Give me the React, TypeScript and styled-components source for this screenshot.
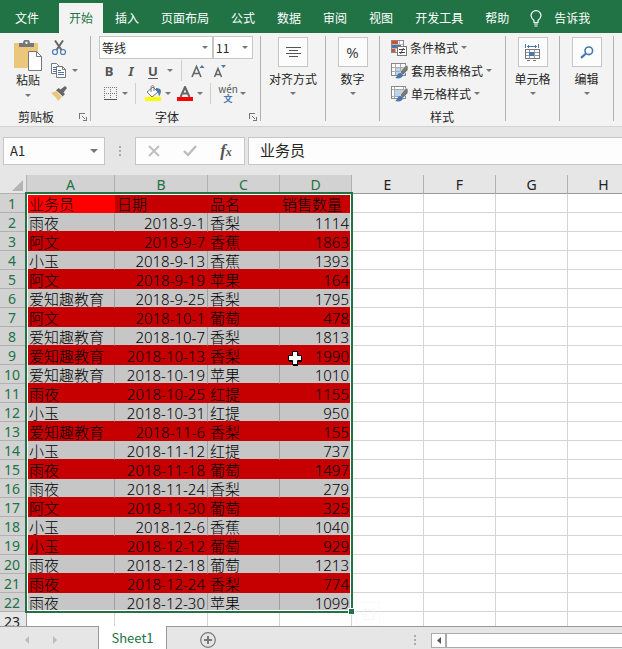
import React from "react";
import styled, { createGlobalStyle, css } from "styled-components";

const GREEN = "#217346";
const FONT = '"Noto Sans CJK SC", "Noto Sans", sans-serif';

const GlobalStyle = createGlobalStyle`
  *, *::before, *::after { box-sizing: border-box; }
  body { margin: 0; background: #e6e6e6; }
  button, input, select {
    font: inherit;
    color: inherit;
    border: 0;
    padding: 0;
    margin: 0;
    background: none;
    border-radius: 0;
  }
  svg { display: block; flex: none; }
`;

const Workbook = styled.div`
  display: flex;
  flex-direction: column;
  height: 100vh;
  overflow: hidden;
  background: #e6e6e6;
  color: #262626;
  font-family: ${FONT};
  font-size: 12px;
  line-height: 16px;
`;

/* ---------- Tabs ---------- */

const TabStrip = styled.nav`
  display: flex;
  flex: none;
  height: 33px;
  padding-top: 3px;
  background: ${GREEN};
  color: #fff;
  white-space: nowrap;
`;

const RibbonTab = styled.button<{ $active?: boolean; $file?: boolean }>`
  flex: none;
  padding: 0 11px;
  ${(p) => p.$file && css`padding: 0 20px 0 15px;`}
  ${(p) => p.$active && css`
    margin-right: 1px;
    padding: 0 10px;
    background: #f3f3f3;
    color: ${GREEN};
  `}
`;

const TellMe = styled.button`
  display: flex;
  flex: none;
  align-items: center;
  gap: 12px;
  padding: 0 10px;
`;

/* ---------- Ribbon ---------- */

const Ribbon = styled.div`
  display: flex;
  flex: none;
  align-items: flex-start;
  padding-top: 3px;
  background: #f3f3f3;
  border-bottom: 1px solid #d2d2d2;
  white-space: nowrap;
`;

const Divider = styled.div`
  flex: none;
  width: 1px;
  height: 85px;
  background: #b1b1b1;
`;

const Group = styled.section<{ $width: number; $pad?: number }>`
  display: flex;
  flex: none;
  flex-direction: column;
  width: ${(p) => p.$width}px;
  height: 90px;
  padding-left: ${(p) => p.$pad ?? 0}px;
`;

const GroupFooter = styled.footer<{ $pad?: number }>`
  display: flex;
  align-items: center;
  justify-content: space-between;
  height: 17px;
  margin-top: 3px;
  padding: 0 3px 0 ${(p) => p.$pad ?? 0}px;
`;

const ToolRow = styled.div<{ $gap?: number }>`
  display: flex;
  align-items: center;
  height: 23px;
  gap: ${(p) => p.$gap ?? 2}px;
`;

const ClipboardBody = styled.div`
  display: flex;
  height: 69px;
  gap: 5px;
`;

const PasteButton = styled.button`
  display: flex;
  flex-direction: column;
  align-items: center;
  width: 32px;
  padding-top: 4px;
`;

const PasteLabel = styled.span`
  margin: 1px 0 6px;
`;

const IconButton = styled.button<{ $width?: number }>`
  display: flex;
  flex: none;
  align-items: center;
  justify-content: center;
  width: ${(p) => p.$width ?? 20}px;
  height: 22px;
`;

const Glyph = styled.span<{ $italic?: boolean; $underline?: boolean }>`
  color: #555;
  font-family: "Noto Sans", sans-serif;
  font-size: 13px;
  font-weight: 700;
  font-style: ${(p) => (p.$italic ? "italic" : "normal")};
  text-decoration: ${(p) => (p.$underline ? "underline" : "none")};
  text-underline-offset: 2px;
`;

const SmallDivider = styled.div`
  width: 1px;
  height: 21px;
  margin: 0 4px;
  background: #cfcfcf;
`;

const Combo = styled.label<{ $width: number }>`
  display: grid;
  align-items: center;
  width: ${(p) => p.$width}px;
  height: 23px;
  border: 1px solid #c6c6c6;
  background: #fff;
  & > * { grid-area: 1 / 1; }
  & > svg { justify-self: end; margin-right: 4px; pointer-events: none; }
`;

const ComboSelect = styled.select`
  appearance: none;
  width: 100%;
  height: 21px;
  padding-left: 2px;
`;

const BigButton = styled.button`
  display: flex;
  flex-direction: column;
  align-items: center;
  width: 100%;
  padding-top: 1px;
`;

const BigIcon = styled.span`
  display: flex;
  align-items: center;
  justify-content: center;
  width: 30px;
  height: 30px;
  margin-bottom: 4px;
  border: 1px solid #c6c6c6;
  background: #fcfcfc;
`;

const BigLabel = styled.span`
  margin-bottom: 5px;
`;

const Percent = styled.span`
  color: #444;
  font-family: "Noto Sans", sans-serif;
  font-size: 15px;
`;

const StyleButton = styled.button`
  display: flex;
  align-items: center;
  gap: 3px;
  height: 23px;
`;

const StyleFooter = styled(GroupFooter)`
  justify-content: center;
  padding: 0 12px 0 0;
`;

/* ---------- Formula bar ---------- */

const FormulaBar = styled.div`
  display: flex;
  flex: none;
  align-items: flex-start;
  height: 48px;
  padding: 10px 0 0 3px;
`;

const NameBox = styled.div`
  display: flex;
  align-items: center;
  width: 102px;
  height: 28px;
  border: 1px solid #c6c6c6;
  background: #fdfdfd;
`;

const NameInput = styled.input`
  flex: 1;
  min-width: 0;
  padding-left: 6px;
  outline: 0;
  font-size: 13px;
`;

const Grip = styled.span`
  display: flex;
  justify-content: center;
  width: 30px;
  padding-top: 9px;
`;

const FormulaTools = styled.div`
  display: flex;
  align-items: center;
  justify-content: space-around;
  width: 110px;
  height: 28px;
  margin-right: 3px;
  border: 1px solid #c6c6c6;
  background: #fdfdfd;
`;

const Fx = styled.span`
  color: #555;
  font-family: "Liberation Serif", serif;
  font-size: 17px;
  font-style: italic;
  font-weight: 700;
  & > small { font-size: 12px; }
`;

const FormulaInput = styled.input`
  flex: 1;
  min-width: 0;
  height: 28px;
  padding: 0 0 3px 11px;
  border: 1px solid #c6c6c6;
  border-right: 0;
  background: #fdfdfd;
  outline: 0;
  font-size: 15px;
`;

/* ---------- Grid ---------- */

const SheetArea = styled.main`
  position: relative;
  flex: 1;
  min-height: 0;
  overflow: hidden;
  background: #fff;
`;

const Sheet = styled.table`
  width: 675px;
  min-width: 100%;
  table-layout: fixed;
  border-collapse: separate;
  border-spacing: 0;
  color: #000;
  font-family: "Noto Sans", ${FONT};
  font-size: 15px;
  font-weight: 300;
  line-height: 16px;
`;

const Col = styled.col<{ $width: number }>`
  width: ${(p) => p.$width}px;
`;

const ColumnHead = styled.th<{ $selected?: boolean }>`
  height: 19px;
  padding: 2px 0 0;
  border-right: 1px solid #b1b1b1;
  border-bottom: 1px solid #999;
  background: ${(p) => (p.$selected ? "#d2d2d2" : "#e6e6e6")};
  color: ${(p) => (p.$selected ? GREEN : "#222")};
  font-size: 14px;
  font-weight: 400;
`;

const Corner = styled.td`
  padding: 0 3px 2px 0;
  border-right: 1px solid #b1b1b1;
  border-bottom: 1px solid #b1b1b1;
  background: #e6e6e6;
  vertical-align: bottom;
  & > svg { margin-left: auto; }
`;

const RowHead = styled.th<{ $selected?: boolean }>`
  height: 19px;
  padding: 2px 2px 0 0;
  border-right: 1px solid #999;
  border-bottom: 1px solid #b1b1b1;
  background: ${(p) => (p.$selected ? "#d2d2d2" : "#e6e6e6")};
  color: ${(p) => (p.$selected ? GREEN : "#222")};
  font-size: 14px;
  font-weight: 400;
`;

type Fill = "none" | "grey" | "red" | "active";
const fills: Record<Fill, [string, string, string]> = {
  none: ["#fff", "#d4d4d4", "#d4d4d4"],
  grey: ["#c6c6c6", "#a0a0a0", "#c60000"],
  red: ["#c60000", "#c60000", "#c60000"],
  active: ["#ff0000", "#ff0000", "#ff0000"],
};

const Cell = styled.td<{ $fill: Fill; $right?: boolean }>`
  height: 19px;
  padding: 2px 2px 0;
  border-right: 1px solid ${(p) => fills[p.$fill][1]};
  border-bottom: 1px solid ${(p) => fills[p.$fill][2]};
  background: ${(p) => fills[p.$fill][0]};
  text-align: ${(p) => (p.$right ? "right" : "left")};
  white-space: nowrap;
`;

const Selection = styled.div`
  position: absolute;
  top: 17px;
  left: 25px;
  width: 328px;
  height: 421px;
  border: 2px solid ${GREEN};
  box-shadow: inset 0 0 0 1px #fff;
  pointer-events: none;
  &::after {
    content: "";
    position: absolute;
    right: -4px;
    bottom: -4px;
    width: 7px;
    height: 7px;
    border: 1px solid #fff;
    background: ${GREEN};
  }
`;

const PlusCursor = styled.svg`
  position: absolute;
  top: 175px;
  left: 287px;
`;

const QuickAnalysis = styled.svg`
  position: absolute;
  top: 427px;
  left: 356px;
`;

/* ---------- Sheet tabs ---------- */

const SheetBar = styled.footer`
  display: flex;
  flex: none;
  height: 23px;
  border-top: 1px solid #999;
`;

const SheetNav = styled.div`
  display: flex;
  justify-content: space-between;
  width: 98px;
  padding: 2px 33px 0 17px;
`;

const SheetTab = styled.button`
  width: 69px;
  margin-top: -1px;
  border: solid #999;
  border-width: 0 1px;
  background: #fff;
  color: ${GREEN};
  font-size: 13px;
`;

const AddSheet = styled.button`
  display: flex;
  margin-left: 33px;
  padding-top: 5px;
`;

const BarGrip = styled.span`
  margin-left: auto;
  padding-top: 8px;
`;

const ScrollBar = styled.div`
  display: flex;
  width: 191px;
  height: 15px;
  margin: 6px 0 0 15px;
  border: 1px solid #ababab;
  border-right: 0;
  background: #fff;
`;

const ScrollLeft = styled.button`
  display: flex;
  align-items: center;
  justify-content: center;
  width: 15px;
  border-right: 2px solid #ababab;
`;

/* ---------- Icons ---------- */

const Caret = ({ size = 6, color = "#777" }: { size?: number; color?: string }) => (
  <svg width={size} height={Math.ceil(size / 2)} viewBox="0 0 6 3" preserveAspectRatio="none">
    <path d="M0 0h6L3 3z" fill={color} />
  </svg>
);

const Dots = () => (
  <svg width="2" height="11" viewBox="0 0 2 11" fill="#aaa" shapeRendering="crispEdges">
    <path d="M0 0h2v2H0zM0 4h2v2H0zM0 8h2v2H0z" />
  </svg>
);

const Bulb = () => (
  <svg width="12" height="17" viewBox="0 0 12 17" fill="none" stroke="#fff" strokeWidth="1.2">
    <path d="M4 12.5v-2C2 9 1 7.8 1 5.6a5 5 0 0 1 10 0C11 7.8 10 9 8 10.500v2zM4 14h4M4.500 16h3" />
  </svg>
);

const PasteIcon = () => (
  <svg width="28" height="31" viewBox="0 0 28 31">
    <path d="M0 3h24v25H0z" fill="#ebc77c" />
    <path d="M5 7V3h4a3.500 3.500 0 0 1 7 0h4v4z" fill="#777" />
    <circle cx="12.500" cy="2.800" r="1.200" fill="#f3f3f3" />
    <path d="M14.500 11.500h8l5 5v14h-13z" fill="#fff" stroke="#777" />
    <path d="M22.500 11.500v5h5" fill="none" stroke="#777" />
  </svg>
);

const ScissorsIcon = () => (
  <svg width="16" height="16" viewBox="0 0 16 16" fill="none">
    <path d="M4 0.500 L10.500 10M12 0.500 L5.500 10" stroke="#666" strokeWidth="2" />
    <circle cx="4" cy="12" r="2.500" stroke="#4677ae" strokeWidth="1.200" />
    <circle cx="12" cy="12" r="2.500" stroke="#4677ae" strokeWidth="1.200" />
  </svg>
);

const CopyIcon = () => (
  <svg width="16" height="15" viewBox="0 0 16 15" fill="#fff" stroke="#777">
    <path d="M.5.5h5l3 3v7h-8z" />
    <path d="M2 4.500h3M2 6.500h3M2 8.500h3" stroke="#4677ae" />
    <path d="M5.500 3.500h6l3 3v8h-9z" />
    <path d="M11.500 3.500v3h3" fill="none" />
    <path d="M7 7.500h3M7 9.500h6M7 11.500h6" stroke="#4677ae" />
  </svg>
);

const BrushIcon = () => (
  <svg width="17" height="15" viewBox="0 0 17 15">
    <path d="M0 7l5-2 6 6-4 4c-1-3-4-5-7-8z" fill="#ebc77c" />
    <path d="M5 4.500l2.500-2.500 2 1.500L14 0l2 2-3.500 4.500L14 8l-2.500 2.500z" fill="#666" />
    <path d="M6 5.500l5 4.500" stroke="#f3f3f3" strokeWidth="0.700" />
  </svg>
);

const LauncherIcon = () => (
  <svg width="8" height="8" viewBox="0 0 8 8" fill="none" stroke="#777" shapeRendering="crispEdges">
    <path d="M.5 6V.5H6M3.500 3.500l3 3M7.500 3.500v4h-4" />
  </svg>
);

const BordersIcon = () => (
  <svg width="13" height="13" viewBox="0 0 13 13" fill="none" stroke="#777" shapeRendering="crispEdges">
    <path d="M0 .5h13M0 6.500h13M.5 0v12M6.500 0v12M12.500 0v12" strokeDasharray="1 1" />
    <path d="M0 12.500h13" stroke="#555" />
  </svg>
);

const BucketIcon = () => (
  <svg width="17" height="17" viewBox="0 0 17 17">
    <path d="M2 7l6-5 5 5-6 5z" fill="#fff" stroke="#777" />
    <path d="M6 7V2.500C6 0 9 0 9 2.500V6" fill="none" stroke="#777" />
    <path d="M11 3c6 0 6 4 3 8.500-.5-2.500-.7-5.500-3-6z" fill="#4677ae" />
    <path d="M0 12h16v4H0z" fill="#ff0" />
  </svg>
);

const FontColorIcon = () => (
  <svg width="16" height="16" viewBox="0 0 16 16">
    <path d="M3.500 11L8 1l4.500 10M5 7.500h6" fill="none" stroke="#666" strokeWidth="2" />
    <path d="M0 11h16v4H0z" fill="#f00" />
  </svg>
);

const GrowIcon = ({ shrink }: { shrink?: boolean }) => (
  <svg width="14" height="14" viewBox="0 0 14 14" fill="none">
    {shrink ? (
      <>
        <path d="M1.500 13L5 4.500l3.500 8.500M3 10.500h4" stroke="#666" strokeWidth="1.500" />
        <path d="M8 1h5l-2.500 3z" fill="#4677ae" />
      </>
    ) : (
      <>
        <path d="M1 13L5.500 2.500l4.500 10.500M2.500 9.500h6" stroke="#666" strokeWidth="1.600" />
        <path d="M8.500 4h5L11 1z" fill="#4677ae" />
      </>
    )}
  </svg>
);

const Phonetic = styled.span`
  display: flex;
  flex-direction: column;
  align-items: center;
  color: #555;
  font-size: 10px;
  line-height: 10px;
  & > b { color: #4677ae; font-size: 9px; }
`;

const AlignIcon = () => (
  <svg width="15" height="13" viewBox="0 0 15 13" stroke="#555" shapeRendering="crispEdges">
    <path d="M0 1.500h15M3 4.500h9M0 7.500h15M3 10.500h9" />
  </svg>
);

const ConditionalIcon = () => (
  <svg width="16" height="16" viewBox="0 0 16 16" shapeRendering="crispEdges">
    <path d="M.5.500h12v12H.5z" fill="#fff" stroke="#888" />
    <path d="M4.500 1v11M8.500 1v11M1 4.500h11M1 8.500h11" stroke="#bbb" />
    <path d="M1 1h6v3H1zM1 9h3v3H1z" fill="#d2502d" />
    <path d="M1 5h9v3H1z" fill="#4677ae" />
    <path d="M6.500 6.500h9v9h-9z" fill="#fff" stroke="#777" />
    <path d="M8 9.500h6M8 12.500h6" stroke="#444" />
    <path d="M12.500 8l-3 6" stroke="#444" shapeRendering="auto" />
  </svg>
);

const FormatTableIcon = ({ single }: { single?: boolean }) => (
  <svg width="17" height="16" viewBox="0 0 17 16">
    <g shapeRendering="crispEdges">
      <path d="M.5.500h14v12H.5z" fill="#fff" stroke="#888" />
      <path d={single ? "M3 4h9v6H3z" : "M5 5h9v7H5z"} fill="#bcd3ea" />
      <path d={single ? "M1 3.500h13M3.500 1v11M12.500 1v11M1 10.500h13" : "M1 4.500h13M1 8.500h13M4.500 1v11M9.500 1v11"} stroke="#aaa" />
    </g>
    <path d="M15 2l2 1v4l-5 5-3-3z" fill="#777" stroke="#f3f3f3" strokeWidth="0.600" />
    <path d="M4 15c2 0 2-5 5-5 2 0 3 1 3 2.500C11 15 8 16 4 15z" fill="#4677ae" />
  </svg>
);

const CellsIcon = () => (
  <svg width="15" height="17" viewBox="0 0 15 17" fill="none" shapeRendering="crispEdges">
    <path d="M.5 0v4M13.500 0v4M2 2.500h10M3.500 1v3M10.500 1v3" stroke="#4677ae" />
    <path d="M.5 5.500h14v9H.5z" fill="#fff" stroke="#777" />
    <path d="M1 8.500h13M1 11.500h13M4.500 6v8M9.500 6v8" stroke="#999" />
    <path d="M4 8h5v4H4z" fill="#4677ae" />
    <path d="M2 16.500h3M8 16.500h3" stroke="#777" />
  </svg>
);

const FindIcon = () => (
  <svg width="14" height="13" viewBox="0 0 14 13" fill="none" stroke="#4677ae">
    <circle cx="8.800" cy="4.800" r="3.800" strokeWidth="1.600" />
    <path d="M6 7.500L1 11.800" strokeWidth="2.200" />
  </svg>
);

/* ---------- Data ---------- */

const tabs = ["插入", "页面布局", "公式", "数据", "审阅", "视图", "开发工具", "帮助"];

const columns: [string, number][] = [
  ["A", 88], ["B", 93], ["C", 72], ["D", 72], ["E", 72], ["F", 72], ["G", 72], ["H", 72],
];

const rows: string[][] = [
  ["业务员", "日期", "品名", "销售数量"],
  ["雨夜", "2018-9-1", "香梨", "1114"],
  ["阿文", "2018-9-7", "香蕉", "1863"],
  ["小玉", "2018-9-13", "香蕉", "1393"],
  ["阿文", "2018-9-19", "苹果", "164"],
  ["爱知趣教育", "2018-9-25", "香梨", "1795"],
  ["阿文", "2018-10-1", "葡萄", "478"],
  ["爱知趣教育", "2018-10-7", "香梨", "1813"],
  ["爱知趣教育", "2018-10-13", "香梨", "1990"],
  ["爱知趣教育", "2018-10-19", "苹果", "1010"],
  ["雨夜", "2018-10-25", "红提", "1155"],
  ["小玉", "2018-10-31", "红提", "950"],
  ["爱知趣教育", "2018-11-6", "香梨", "155"],
  ["小玉", "2018-11-12", "红提", "737"],
  ["雨夜", "2018-11-18", "葡萄", "1497"],
  ["雨夜", "2018-11-24", "香梨", "279"],
  ["阿文", "2018-11-30", "葡萄", "325"],
  ["小玉", "2018-12-6", "香蕉", "1040"],
  ["小玉", "2018-12-12", "葡萄", "929"],
  ["雨夜", "2018-12-18", "葡萄", "1213"],
  ["雨夜", "2018-12-24", "香梨", "774"],
  ["雨夜", "2018-12-30", "苹果", "1099"],
  [],
];

const fillOf = (row: number, col: number): Fill => {
  if (col > 3 || row > 21) return "none";
  if (row === 0 && col === 0) return "active";
  return row % 2 === 0 ? "red" : "grey";
};

const Launcher = ({ label }: { label: string }) => (
  <button aria-label={label}><LauncherIcon /></button>
);

const Split = ({ label, children }: { label: string; children: React.ReactNode }) => (
  <ToolRow $gap={0}>
    <IconButton $width={22} aria-label={label}>{children}</IconButton>
    <IconButton $width={8} aria-label={label + "选项"}><Caret /></IconButton>
  </ToolRow>
);

const Collapsed = ({ width, label, children }: { width: number; label: string; children: React.ReactNode }) => (
  <>
    <Group $width={width}>
      <BigButton>
        <BigIcon>{children}</BigIcon>
        <BigLabel>{label}</BigLabel>
        <Caret />
      </BigButton>
    </Group>
    <Divider />
  </>
);

export default function App() {
  return (
    <Workbook>
      <GlobalStyle />
      <TabStrip>
        <RibbonTab $file>文件</RibbonTab>
        <RibbonTab $active>开始</RibbonTab>
        {tabs.map((t) => <RibbonTab key={t}>{t}</RibbonTab>)}
        <TellMe><Bulb />告诉我</TellMe>
      </TabStrip>

      <Ribbon>
        <Group $width={90} $pad={12}>
          <ClipboardBody>
            <PasteButton>
              <PasteIcon />
              <PasteLabel>粘贴</PasteLabel>
              <Caret />
            </PasteButton>
            <div>
              <ToolRow><IconButton aria-label="剪切"><ScissorsIcon /></IconButton></ToolRow>
              <ToolRow $gap={0}>
                <IconButton aria-label="复制"><CopyIcon /></IconButton>
                <IconButton $width={12} aria-label="复制选项"><Caret /></IconButton>
              </ToolRow>
              <ToolRow><IconButton aria-label="格式刷"><BrushIcon /></IconButton></ToolRow>
            </div>
          </ClipboardBody>
          <GroupFooter $pad={6}>剪贴板<Launcher label="剪贴板设置" /></GroupFooter>
        </Group>
        <Divider />

        <Group $width={169} $pad={8}>
          <ToolRow $gap={0}>
            <Combo $width={114}>
              <ComboSelect aria-label="字体" defaultValue="等线"><option>等线</option></ComboSelect>
              <Caret />
            </Combo>
            <Combo $width={40}>
              <ComboSelect aria-label="字号" defaultValue="11"><option>11</option></ComboSelect>
              <Caret />
            </Combo>
          </ToolRow>
          <ToolRow>
            <IconButton><Glyph>B</Glyph></IconButton>
            <IconButton><Glyph $italic>I</Glyph></IconButton>
            <IconButton><Glyph $underline>U</Glyph></IconButton>
            <IconButton $width={10} aria-label="下划线选项"><Caret /></IconButton>
            <SmallDivider />
            <IconButton aria-label="增大字号"><GrowIcon /></IconButton>
            <IconButton aria-label="减小字号"><GrowIcon shrink /></IconButton>
          </ToolRow>
          <ToolRow>
            <Split label="边框"><BordersIcon /></Split>
            <SmallDivider />
            <Split label="填充颜色"><BucketIcon /></Split>
            <Split label="字体颜色"><FontColorIcon /></Split>
            <SmallDivider />
            <Split label="拼音"><Phonetic>wén<b>文</b></Phonetic></Split>
          </ToolRow>
          <GroupFooter $pad={56}>字体<Launcher label="字体设置" /></GroupFooter>
        </Group>
        <Divider />

        <Collapsed width={64} label="对齐方式"><AlignIcon /></Collapsed>
        <Collapsed width={53} label="数字"><Percent>%</Percent></Collapsed>

        <Group $width={125} $pad={11}>
          <StyleButton><ConditionalIcon />条件格式<Caret /></StyleButton>
          <StyleButton><FormatTableIcon />套用表格格式<Caret /></StyleButton>
          <StyleButton><FormatTableIcon single />单元格样式<Caret /></StyleButton>
          <StyleFooter>样式</StyleFooter>
        </Group>
        <Divider />

        <Collapsed width={53} label="单元格"><CellsIcon /></Collapsed>
        <Collapsed width={53} label="编辑"><FindIcon /></Collapsed>
      </Ribbon>

      <FormulaBar>
        <NameBox>
          <NameInput aria-label="名称框" defaultValue="A1" />
          <IconButton aria-label="名称列表"><Caret size={8} /></IconButton>
        </NameBox>
        <Grip><Dots /></Grip>
        <FormulaTools>
          <IconButton aria-label="取消">
            <svg width="12" height="12" viewBox="0 0 12 12" stroke="#bdbdbd" strokeWidth="1.800"><path d="M1 1l10 10M11 1L1 11" /></svg>
          </IconButton>
          <IconButton aria-label="输入">
            <svg width="14" height="12" viewBox="0 0 14 12" fill="none" stroke="#bdbdbd" strokeWidth="2.400"><path d="M1 6l4 4L13 1" /></svg>
          </IconButton>
          <IconButton aria-label="插入函数"><Fx>f<small>x</small></Fx></IconButton>
        </FormulaTools>
        <FormulaInput aria-label="编辑栏" defaultValue="业务员" />
      </FormulaBar>

      <SheetArea>
        <Sheet>
          <colgroup>
            <Col $width={27} />
            {columns.map(([name, w]) => <Col key={name} $width={w} />)}
            <col />
          </colgroup>
          <thead>
            <tr>
              <Corner>
                <svg width="11" height="11" viewBox="0 0 11 11"><path d="M11 0v11H0z" fill="#b4b4b4" /></svg>
              </Corner>
              {columns.map(([name], c) => (
                <ColumnHead key={name} scope="col" $selected={c < 4}>{name}</ColumnHead>
              ))}
            </tr>
          </thead>
          <tbody>
            {rows.map((row, r) => (
              <tr key={r}>
                <RowHead scope="row" $selected={r < 22}>{r + 1}</RowHead>
                {columns.map(([name], c) => (
                  <Cell key={name} $fill={fillOf(r, c)} $right={r > 0 && (c === 1 || c === 3)}>
                    {row[c]}
                  </Cell>
                ))}
              </tr>
            ))}
          </tbody>
        </Sheet>
        <Selection />
        <QuickAnalysis width="24" height="24" viewBox="0 0 24 24" fill="none" stroke="#f7f7f7">
          <path d="M.5.500h23v23H.5z" strokeDasharray="1 1" />
          <path d="M9 7.500h9v10H8l3-5H5l5-7" />
        </QuickAnalysis>
        <PlusCursor width="16" height="16" viewBox="0 0 16 16">
          <path d="M6 3h5v4h4v5h-4v4H6v-4H2V7h4z" fill="#000" />
          <path d="M5.500 1.500h5v4h4v5h-4v4h-5v-4h-4v-5h4z" fill="#fff" stroke="#000" />
        </PlusCursor>
      </SheetArea>

      <SheetBar>
        <SheetNav>
          <IconButton aria-label="上一张">
            <svg width="4" height="8" viewBox="0 0 4 8"><path d="M4 0v8L0 4z" fill="#bbb" /></svg>
          </IconButton>
          <IconButton aria-label="下一张">
            <svg width="4" height="8" viewBox="0 0 4 8"><path d="M0 0v8l4-4z" fill="#bbb" /></svg>
          </IconButton>
        </SheetNav>
        <SheetTab>Sheet1</SheetTab>
        <AddSheet aria-label="新工作表">
          <svg width="16" height="16" viewBox="0 0 16 16" fill="none" stroke="#777">
            <circle cx="8" cy="8" r="7.300" strokeWidth="1.200" />
            <path d="M8 4v8M4 8h8" strokeWidth="2" />
          </svg>
        </AddSheet>
        <BarGrip><Dots /></BarGrip>
        <ScrollBar>
          <ScrollLeft aria-label="向左滚动">
            <svg width="4" height="7" viewBox="0 0 4 7"><path d="M4 0v7L0 3.500z" fill="#555" /></svg>
          </ScrollLeft>
        </ScrollBar>
      </SheetBar>
    </Workbook>
  );
}
